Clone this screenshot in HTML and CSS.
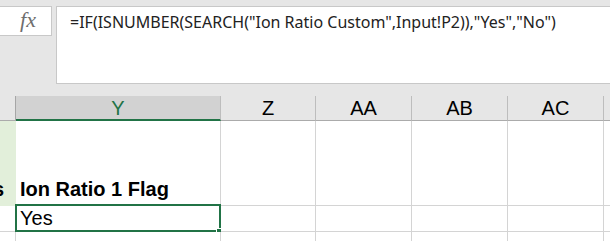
FILE: index.html
```html
<!DOCTYPE html>
<html>
    <head>
        <meta charset="UTF-8">
        <title>Ion Ratio Flag</title>
        <link rel="stylesheet" href="styles.css">
    </head>

    <body>
        <div class="formula-bar">
            <div class="fx-box">fx</div>
            <div class="formula-box">=IF(ISNUMBER(SEARCH("Ion Ratio Custom",Input!P2)),"Yes","No")</div>
        </div>

        <div class="sheet">
            <!-- kolonne overskrifter -->
            <div class="head corner"></div>
            <div class="head selected">Y</div>
            <div class="head">Z</div>
            <div class="head">AA</div>
            <div class="head">AB</div>
            <div class="head">AC</div>
            <div class="head rest"></div>

            <!-- række 1 -->
            <div class="cell side-green"><span>s</span></div>
            <div class="cell title">Ion Ratio 1 Flag</div>
            <div class="cell"></div>
            <div class="cell"></div>
            <div class="cell"></div>
            <div class="cell"></div>
            <div class="cell rest"></div>

            <!-- række 2 -->
            <div class="cell small"></div>
            <div class="cell small active">Yes</div>
            <div class="cell small"></div>
            <div class="cell small"></div>
            <div class="cell small"></div>
            <div class="cell small"></div>
            <div class="cell small rest"></div>

            <!-- række 3 -->
            <div class="cell tail"></div>
            <div class="cell tail"></div>
            <div class="cell tail"></div>
            <div class="cell tail"></div>
            <div class="cell tail"></div>
            <div class="cell tail"></div>
            <div class="cell tail rest"></div>
        </div>
    </body>
</html>
```

FILE: styles.css
```css
*, *::after, *::before {
    box-sizing: border-box;
}

body {
    margin: 0;
    background-color: #e6e6e6;
    font-family: 'Liberation Sans', Arial, sans-serif;
    overflow: hidden;
}

.formula-bar {
    display: flex;
    gap: 4px;
    padding-top: 6px;
    height: 96px; /*header starter ved 96px*/
    align-items: flex-start;
}

.fx-box {
    width: 53px;
    height: 30px;
    margin-left: -1px;
    background-color: white;
    border: 1px solid #c8c8c8;
    font-family: 'Liberation Serif', 'DejaVu Serif', serif;
    font-style: italic;
    font-size: 22px;
    color: #6e6e6e;
    display: flex;
    justify-content: center;
    align-items: center;
    padding-left: 5px;
    padding-bottom: 2px;
}

.formula-box {
    flex: 1;
    height: 78px;
    margin-right: -1px;
    background-color: white;
    border: 1px solid #c8c8c8;
    font-family: 'Noto Sans', 'Open Sans', sans-serif;
    font-size: 16px;
    color: #222;
    padding: 4px 0 0 13px;
    white-space: nowrap;
}

.sheet {
    display: grid;
    grid-template-columns: 16px 205px 95px 96px 96px 96px 1fr;
    grid-template-rows: 25px 85px 26px 9px;
}

.head {
    height: 25px;
    border-right: 1px solid #bdbdbd;
    border-bottom: 1px solid #ababab;
    font-size: 20px;
    line-height: 23px;
    text-align: center;
    padding-top: 1px;
    color: black;
}

.head.corner {
    border-right-color: #a6a6a6;
}

.head.selected {
    background-color: #d2d2d2;
    color: #217346;
    border-bottom: 2px solid #217346;
}

.head.rest,
.cell.rest {
    border-right: none;
}

.cell {
    background-color: white;
    border-right: 1px solid #d4d4d4;
    border-bottom: 1px solid #d4d4d4;
    font-size: 20px;
    line-height: 23px;
    padding-left: 4px;
    color: black;
    position: relative; /*til markering af aktiv celle*/
}

.cell.side-green {
    background-color: #e2efda;
    border-right-color: #e2efda;
    border-bottom-color: #e2efda;
    display: flex;
    justify-content: flex-end;
    align-items: flex-end;
    padding: 0 11px 4px 0;
    font-weight: bold;
}

.cell.title {
    display: flex;
    align-items: flex-end;
    font-weight: bold;
    padding-bottom: 4px;
}

.cell.small {
    padding-top: 1px;
}

.cell.tail {
    border-bottom: none;
}

.cell.active::before {
    content: '';
    position: absolute;
    top: -2px;
    left: -1px;
    right: -1px;
    bottom: -1px;
    border: 2px solid #217346;
}

.cell.active::after {
    content: '';
    position: absolute;
    right: -2px;
    bottom: -3px;
    width: 6px;
    height: 6px;
    background-color: #217346;
    border-left: 1px solid white;
    border-top: 1px solid white;
}
```
